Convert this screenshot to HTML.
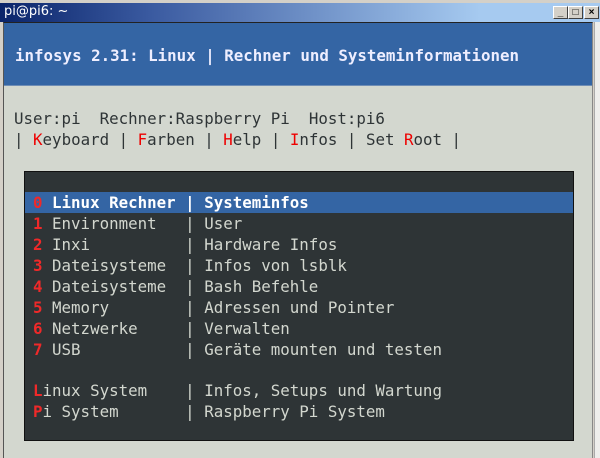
<!DOCTYPE html>
<html><head><style>
*{margin:0;padding:0;box-sizing:border-box}
body{width:600px;height:458px;overflow:hidden;background:#d4d0c8;position:relative;font-family:"DejaVu Sans Mono","Liberation Mono",monospace;}
.title{position:absolute;left:0;top:3px;width:600px;height:19px;background:linear-gradient(90deg,#0a246a,#3a5aa0 25%,#a6caf0 80%,#a6caf0);}
.title span{position:absolute;left:4px;top:1px;color:#fff;font:13px "DejaVu Sans","Liberation Sans",sans-serif;}
.btn{position:absolute;top:6px;width:15px;height:13px;background:#d4d0c8;border:1px solid;border-color:#fff #404040 #404040 #fff;font:bold 10px "Liberation Sans",sans-serif;text-align:center;line-height:11px;color:#000}
.frame{position:absolute;left:3px;top:22px;width:590px;height:436px;background:#d3d7cf;border-left:1px solid #555;border-top:1px solid #222;border-right:1px solid #888;}
.sb{position:absolute;left:594px;top:22px;width:6px;height:436px;background:#eeeeec;border-left:1px solid #aaa}
.hdr{position:absolute;left:4px;top:23px;width:588px;height:63px;background:#3465a4;border-bottom:1px solid #6f8db5}
.hdr div{position:absolute;left:11px;top:23px;color:#eef;font-weight:bold;font-size:15.8px;white-space:pre}
.t{position:absolute;left:14px;font-size:15.8px;color:#2e3436;white-space:pre;line-height:21px}
.r{color:#e00}
.box{position:absolute;left:24px;top:171px;width:550px;height:270px;background:#2e3436;border:1px solid #111}
.row{position:absolute;left:0;width:548px;height:21px;line-height:21px;padding-left:8px;font-size:15.8px;color:#d3d7cf;white-space:pre}
.row b{color:#ef2929}
.sel{background:#3465a4;color:#fff;font-weight:bold}
</style></head><body>
<div class="title"><span>pi@pi6: ~</span></div>
<div class="btn" style="left:553px">_</div><div class="btn" style="left:568px">□</div><div class="btn" style="left:584px">×</div>
<div class="frame"></div><div class="sb"></div>
<div class="hdr"><div>infosys 2.31: Linux | Rechner und Systeminformationen</div></div>
<div class="t" style="top:108px">User:pi  Rechner:Raspberry Pi  Host:pi6</div>
<div class="t" style="top:129px">| <span class="r">K</span>eyboard | <span class="r">F</span>arben | <span class="r">H</span>elp | <span class="r">I</span>nfos | Set <span class="r">R</span>oot |</div>
<div class="box">
<div class="row sel" style="top:20px"><b>0</b> Linux Rechner | Systeminfos</div>
<div class="row" style="top:41px"><b>1</b> Environment   | User</div>
<div class="row" style="top:62px"><b>2</b> Inxi          | Hardware Infos</div>
<div class="row" style="top:83px"><b>3</b> Dateisysteme  | Infos von lsblk</div>
<div class="row" style="top:104px"><b>4</b> Dateisysteme  | Bash Befehle</div>
<div class="row" style="top:125px"><b>5</b> Memory        | Adressen und Pointer</div>
<div class="row" style="top:146px"><b>6</b> Netzwerke     | Verwalten</div>
<div class="row" style="top:167px"><b>7</b> USB           | Geräte mounten und testen</div>
<div class="row" style="top:208px"><b>L</b>inux System    | Infos, Setups und Wartung</div>
<div class="row" style="top:229px"><b>P</b>i System       | Raspberry Pi System</div>
</div>
</body></html>
